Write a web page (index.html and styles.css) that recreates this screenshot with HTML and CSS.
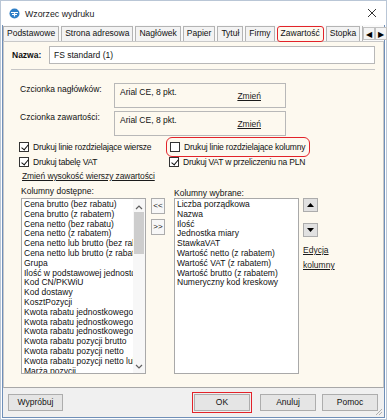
FILE: index.html
```html
<!DOCTYPE html>
<html>
<head>
<meta charset="utf-8">
<link rel="stylesheet" href="styles.css">
</head>
<body>
<div class="window">
  <div class="titlebar">
    <svg class="appicon" width="11" height="11" viewBox="0 0 11 11">
      <circle cx="5.5" cy="5.5" r="5" fill="#2f7fc7"/>
      <path d="M2 4.5h7M3 6.5h5" stroke="#fff" stroke-width="1.2"/>
      <path d="M5.5 4.5v4" stroke="#fff" stroke-width="1.2"/>
    </svg>
    <span class="title">Wzorzec wydruku</span>
    <svg class="close" width="10" height="10" viewBox="0 0 10 10">
      <path d="M1 1L9 9M9 1L1 9" stroke="#333" stroke-width="1"/>
    </svg>
  </div>
  <div class="client">
    <div class="tabs">
      <div class="tab">Podstawowe</div>
      <div class="tab">Strona adresowa</div>
      <div class="tab">Nagłówek</div>
      <div class="tab">Papier</div>
      <div class="tab">Tytuł</div>
      <div class="tab">Firmy</div>
      <div class="tab active">Zawartość</div>
      <div class="tab">Stopka</div>
      <div class="tab partial"></div>
      <div class="tabarrows">
        <span class="tarrow">&#9664;</span><span class="tarrow">&#9654;</span>
      </div>
    </div>
    <div class="panel">
      <div class="namerow">
        <span class="namelabel">Nazwa:</span>
        <div class="nameinput">FS standard (1)</div>
      </div>
      <div class="sep"></div>
      <div class="fontrow">
        <span class="fontlabel">Czcionka nagłówków:</span>
        <div class="fontbox"><span class="fontval">Arial CE, 8 pkt.</span><a class="link change">Zmień</a></div>
      </div>
      <div class="fontrow second">
        <span class="fontlabel">Czcionka zawartości:</span>
        <div class="fontbox"><span class="fontval">Arial CE, 8 pkt.</span><a class="link change">Zmień</a></div>
      </div>
      <div class="checks">
        <label class="chk"><span class="box on"></span>Drukuj linie rozdzielające wiersze</label>
        <label class="chk hl"><span class="box"></span>Drukuj linie rozdzielające kolumny</label>
        <label class="chk"><span class="box on"></span>Drukuj tabelę VAT</label>
        <label class="chk"><span class="box on"></span>Drukuj VAT w przeliczeniu na PLN</label>
      </div>
      <a class="link rowheight">Zmień wysokość wierszy zawartości</a>
      <div class="cols">
        <div class="col">
          <div class="collabel">Kolumny dostępne:</div>
          <div class="list avail">
            <div class="items">
              <div>Cena brutto (bez rabatu)</div>
              <div>Cena brutto (z rabatem)</div>
              <div>Cena netto (bez rabatu)</div>
              <div>Cena netto (z rabatem)</div>
              <div>Cena netto lub brutto (bez rabatu)</div>
              <div>Cena netto lub brutto (z rabatem)</div>
              <div>Grupa</div>
              <div>Ilość w podstawowej jednostce</div>
              <div>Kod CN/PKWiU</div>
              <div>Kod dostawy</div>
              <div>KosztPozycji</div>
              <div>Kwota rabatu jednostkowego</div>
              <div>Kwota rabatu jednostkowego</div>
              <div>Kwota rabatu jednostkowego</div>
              <div>Kwota rabatu pozycji brutto</div>
              <div>Kwota rabatu pozycji netto</div>
              <div>Kwota rabatu pozycji netto lub</div>
              <div>Marża pozycji</div>
            </div>
            <div class="scrollbar">
              <svg class="sarrow" width="8" height="6" viewBox="0 0 8 6"><path d="M1 5L4 2L7 5" fill="none" stroke="#606060" stroke-width="1.2"/></svg>
              <div class="thumb"></div>
              <div class="track"></div>
              <svg class="sarrow" width="8" height="6" viewBox="0 0 8 6"><path d="M1 1L4 4L7 1" fill="none" stroke="#606060" stroke-width="1.2"/></svg>
            </div>
          </div>
        </div>
        <div class="movebtns">
          <div class="smallbtn">&lt;&lt;</div>
          <div class="smallbtn">&gt;&gt;</div>
        </div>
        <div class="col">
          <div class="collabel sel">Kolumny wybrane:</div>
          <div class="list chosen">
            <div class="items">
              <div>Liczba porządkowa</div>
              <div>Nazwa</div>
              <div>Ilość</div>
              <div>Jednostka miary</div>
              <div>StawkaVAT</div>
              <div>Wartość netto (z rabatem)</div>
              <div>Wartość VAT (z rabatem)</div>
              <div>Wartość brutto (z rabatem)</div>
              <div>Numeryczny kod kreskowy</div>
            </div>
          </div>
        </div>
        <div class="sidectl">
          <div class="arrbtn up"><svg width="7" height="4" viewBox="0 0 7 4"><path d="M0 4L3.5 0L7 4Z" fill="#000"/></svg></div>
          <div class="arrbtn down"><svg width="7" height="4" viewBox="0 0 7 4"><path d="M0 0L3.5 4L7 0Z" fill="#000"/></svg></div>
          <a class="link edit">Edycja</a>
          <a class="link edit2">kolumny</a>
        </div>
      </div>
    </div>
    <div class="bottombar">
      <div class="btn try">Wypróbuj</div>
      <div class="spacer"></div>
      <div class="btn ok">OK</div>
      <div class="btn">Anuluj</div>
      <div class="btn">Pomoc</div>
      <svg class="grip" width="10" height="10" viewBox="0 0 10 10">
        <path d="M9 3L3 9M9 6L6 9" stroke="#b0b0b0" stroke-width="1"/>
      </svg>
    </div>
  </div>
</div>
</body>
</html>
```
FILE: styles.css
```css
* { box-sizing: border-box; }
html, body { margin: 0; padding: 0; }
body {
  width: 387px;
  height: 420px;
  background: #ffffff;
  font-family: "Liberation Sans", Arial, sans-serif;
  font-size: 8.5px;
  color: #111;
  overflow: hidden;
}
.window {
  width: 387px;
  height: 420px;
  display: flex;
  flex-direction: column;
  border: 1px solid #b9c6d6;
}
.titlebar {
  height: 24px;
  display: flex;
  align-items: center;
  padding-left: 8px;
  background: #fff;
  flex: none;
}
.appicon { margin-right: 5px; }
.title { font-size: 8.8px; color: #222; flex: 1; padding-top: 1px; }
.close { margin-right: 9px; }
.client {
  flex: 1;
  margin: 0 1px 1px 1px;
  border-left: 1px solid #6f8fb8;
  border-right: 1px solid #6f8fb8;
  border-bottom: 1px solid #6f8fb8;
  background: #f0f0f0;
  display: flex;
  flex-direction: column;
  position: relative;
}
.tabs {
  height: 16px;
  display: flex;
  align-items: flex-end;
  background: #fafafa;
  flex: none;
}
.tab {
  height: 15px;
  line-height: 13px;
  padding: 0 3px;
  margin-right: 2px;
  border: 1px solid #b4b4b4;
  border-bottom: none;
  background: #f3f3f3;
  color: #111;
  white-space: nowrap;
}
.tab.active {
  background: #fdf9ef;
  height: 16px;
  border: 1.5px solid #e2232a;
  border-radius: 3px;
  line-height: 13px;
  position: relative;
  top: 1px;
  z-index: 2;
}
.tab.partial { width: 7px; padding: 0; margin-right: 0; border-right: none; }
.tabarrows {
  display: flex;
  height: 13px;
  margin-bottom: 1px;
}
.tarrow {
  width: 12px;
  height: 13px;
  font-size: 8px;
  line-height: 13px;
  text-align: center;
  background: #f4f4f4;
  border: 1px solid #c2c2c2;
  color: #000;
}
.panel {
  height: 347px;
  flex: none;
  background: #fdf9ef;
  border: 1px solid #c8c8c8;
  border-bottom: 1px solid #a8a8a8;
  padding: 4px 7px 0 7px;
  display: flex;
  flex-direction: column;
}
.namerow {
  display: flex;
  align-items: center;
  height: 18px;
}
.namelabel { font-weight: bold; width: 38px; padding-left: 1px; }
.nameinput {
  flex: 1;
  height: 18px;
  background: #fff;
  border: 1px solid #b8b8b8;
  padding: 3px 4px;
  margin-right: 1px;
}
.sep {
  height: 0;
  border-top: 1px solid #c6c6c6;
  margin-top: 5px;
  margin-right: 1px;
}
.fontrow {
  display: flex;
  margin-top: 13px;
  height: 25px;
}
.fontrow.second { margin-top: 3px; }
.fontlabel { width: 103px; padding-left: 9px; padding-top: 1px; }
.fontbox {
  width: 172px;
  height: 25px;
  border: 1px solid #b8b8b8;
  padding: 3px 5px;
  display: flex;
  align-items: flex-start;
}
.fontval { flex: 1; }
.change { margin-right: 19px; margin-top: 4px; }
.link { color: #1a1a1a; text-decoration: underline; }
.checks {
  display: grid;
  grid-template-columns: 150px 1fr;
  row-gap: 3px;
  margin-top: 5px;
  padding-left: 8px;
  letter-spacing: -0.2px;
}
.chk {
  display: flex;
  align-items: center;
  height: 12px;
  white-space: nowrap;
}
.box {
  width: 10px;
  height: 10px;
  border: 1px solid #333;
  background: #fff;
  margin-right: 4px;
  position: relative;
  flex: none;
}
.box.on::after {
  content: "";
  position: absolute;
  left: 2.5px;
  top: 0px;
  width: 3px;
  height: 6px;
  border-right: 1.6px solid #111;
  border-bottom: 1.6px solid #111;
  transform: rotate(40deg);
}
.chk.hl {
  outline: 1.5px solid #e2232a;
  outline-offset: 3px;
  border-radius: 2px;
  width: 136px;
  margin-left: 1px;
}
.rowheight { margin-top: 3px; padding-left: 11px; letter-spacing: -0.1px; }
.cols {
  display: flex;
  margin-top: 5px;
  padding-left: 10px;
}
.col { display: flex; flex-direction: column; }
.collabel { height: 12px; }
.collabel.sel { padding-top: 2px; }
.list {
  width: 125px;
  height: 176px;
  background: #fff;
  border: 1px solid #a9a9a9;
  display: flex;
  overflow: hidden;
}
.items {
  flex: 1;
  padding: 1px 0 0 2px;
  line-height: 9.8px;
  white-space: nowrap;
  overflow: hidden;
}
.scrollbar {
  width: 12px;
  flex: none;
  display: flex;
  flex-direction: column;
  align-items: center;
  background: #f7f7f7;
  padding: 5px 0 3px 0;
}
.thumb {
  width: 10px;
  height: 42px;
  background: #cdcdcd;
  margin-top: 2px;
}
.track { flex: 1; }
.movebtns {
  display: flex;
  flex-direction: column;
  gap: 5px;
  padding-top: 12px;
  margin: 0 9px 0 5px;
}
.smallbtn {
  width: 14px;
  height: 16px;
  border: 1px solid #acacac;
  background: #f7f7f7;
  text-align: center;
  line-height: 14px;
  font-size: 8px;
}
.sidectl {
  display: flex;
  flex-direction: column;
  padding-top: 12px;
  margin-left: 4px;
}
.arrbtn {
  width: 15px;
  height: 14px;
  border: 1px solid #acacac;
  background: #e1e1e1;
  display: flex;
  align-items: center;
  justify-content: center;
}
.arrbtn.down { margin-top: 11px; }
.edit { margin-top: 8px; }
.edit2 { margin-top: 5px; }
.bottombar {
  flex: 1;
  display: flex;
  align-items: center;
  padding: 0 6px 1px 5px;
  gap: 6px;
  position: relative;
}
.spacer { flex: 1; }
.btn {
  width: 56px;
  height: 17px;
  border: 1px solid #adadad;
  background: #e5e5e5;
  text-align: center;
  line-height: 15px;
}
.btn.try { width: 55px; }
.btn.ok {
  outline: 1.5px solid #e2232a;
  outline-offset: 1px;
  margin-right: 4px;
}
.grip { position: absolute; right: 1px; bottom: 1px; }
```
